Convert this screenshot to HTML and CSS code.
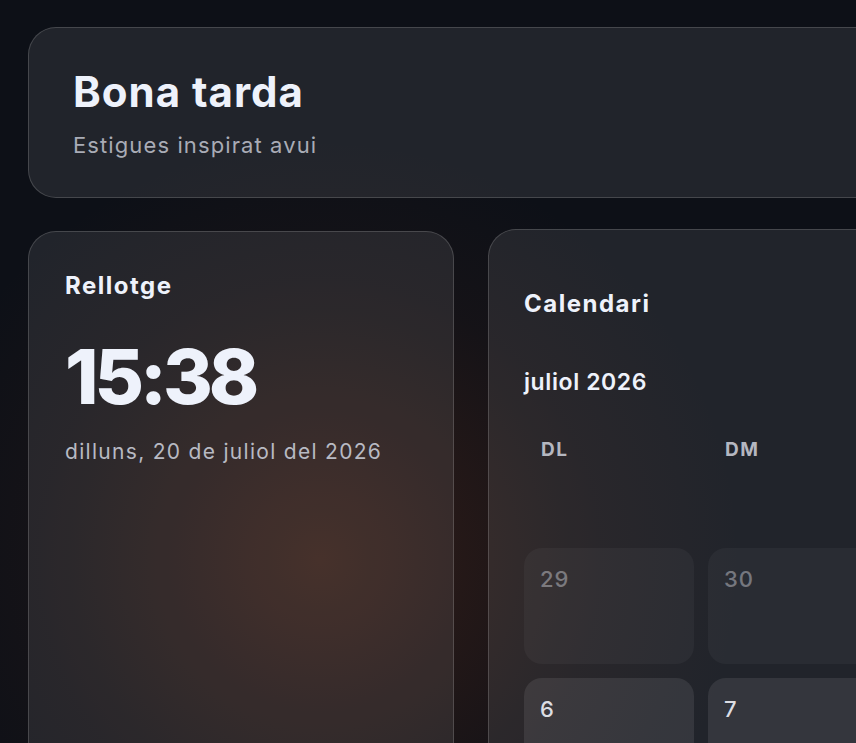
FILE: index.html
```html
<!DOCTYPE html>
<html lang="ca">
<head>
    <meta charset="UTF-8">
    <meta name="viewport" content="width=device-width, initial-scale=1.0">
    <title>Tauler</title>
    <link rel="stylesheet" href="styles.css">
</head>
<body>
    <main class="dashboard">
        <header class="card greeting">
            <h1>Bona tarda</h1>
            <p>Estigues inspirat avui</p>
        </header>

        <section class="card clock">
            <h2 class="card-title">Rellotge</h2>
            <div class="clock-time">15:38</div>
            <div class="clock-date">dilluns, 20 de juliol del 2026</div>
        </section>

        <section class="card calendar">
            <div class="calendar-head">
                <h2 class="card-title">Calendari</h2>
                <div class="calendar-nav">
                    <button class="nav-btn">&lsaquo;</button>
                    <button class="nav-btn">Avui</button>
                    <button class="nav-btn">&rsaquo;</button>
                </div>
            </div>
            <div class="calendar-month">juliol 2026</div>

            <div class="calendar-grid">
                <div class="weekday">DL</div>
                <div class="weekday">DM</div>
                <div class="weekday">DC</div>
                <div class="weekday">DJ</div>
                <div class="weekday">DV</div>
                <div class="weekday">DS</div>
                <div class="weekday">DG</div>

                <div class="day other">29</div>
                <div class="day other">30</div>
                <div class="day">1</div>
                <div class="day">2</div>
                <div class="day">3</div>
                <div class="day">4</div>
                <div class="day">5</div>

                <div class="day">6</div>
                <div class="day">7</div>
                <div class="day">8</div>
                <div class="day">9</div>
                <div class="day">10</div>
                <div class="day">11</div>
                <div class="day">12</div>

                <div class="day">13</div>
                <div class="day">14</div>
                <div class="day">15</div>
                <div class="day">16</div>
                <div class="day">17</div>
                <div class="day">18</div>
                <div class="day">19</div>

                <div class="day today">20</div>
                <div class="day">21</div>
                <div class="day">22</div>
                <div class="day">23</div>
                <div class="day">24</div>
                <div class="day">25</div>
                <div class="day">26</div>

                <div class="day">27</div>
                <div class="day">28</div>
                <div class="day">29</div>
                <div class="day">30</div>
                <div class="day">31</div>
                <div class="day other">1</div>
                <div class="day other">2</div>
            </div>
        </section>
    </main>
</body>
</html>
```

FILE: styles.css
```css
* {
    margin: 0;
    padding: 0;
    box-sizing: border-box;
}

html, body {
    height: 100%;
}

body {
    font-family: Inter, "Noto Sans", sans-serif;
    color: #eef2fb;
    background-color: #0d1017;
    background-image: radial-gradient(circle at 320px 560px,
        rgba(125, 55, 25, 0.36) 0,
        rgba(125, 55, 25, 0.2) 150px,
        rgba(125, 55, 25, 0.07) 280px,
        rgba(125, 55, 25, 0) 420px);
    background-repeat: no-repeat;
    padding: 27px 0 0 28px;
    overflow: hidden;
}

.dashboard {
    display: grid;
    grid-template-columns: 426px 1346px;
    column-gap: 34px;
    row-gap: 31px;
    width: max-content;
    align-items: start;
}

.card {
    background: rgba(255, 255, 255, 0.088);
    border: 1px solid rgba(255, 255, 255, 0.16);
    border-radius: 28px;
}

.card-title {
    font-size: 24px;
    line-height: 1.2;
    font-weight: 700;
    letter-spacing: 1.5px;
}

/* greeting */
.greeting {
    grid-column: 1 / -1;
    padding: 40px 44px 37px;
}

.greeting h1 {
    font-size: 42px;
    line-height: 48px;
    font-weight: 700;
    letter-spacing: 1px;
    margin-bottom: 14px;
}

.greeting p {
    font-size: 22px;
    line-height: 30px;
    color: #a9acb6;
    letter-spacing: 1.1px;
}

/* clock */
.clock {
    margin-top: 2px;
    min-height: 700px;
    padding: 40px 36px;
}

.clock-time {
    font-size: 76px;
    line-height: 76px;
    font-weight: 800;
    letter-spacing: -4px;
    margin-top: 37px;
}

.clock-date {
    font-size: 21px;
    line-height: 28px;
    color: #b8bac3;
    margin-top: 24px;
    letter-spacing: 1.3px;
}

/* calendar */
.calendar {
    padding: 38px 35px;
}

.calendar-head {
    display: flex;
    align-items: center;
    justify-content: space-between;
    min-height: 72px;
}

.calendar-nav {
    display: flex;
    gap: 10px;
}

.nav-btn {
    font-family: inherit;
    font-size: 16px;
    color: #eef2fb;
    background: rgba(255, 255, 255, 0.08);
    border: 1px solid rgba(255, 255, 255, 0.14);
    border-radius: 14px;
    padding: 10px 16px;
}

.calendar-month {
    font-size: 23px;
    line-height: 30px;
    font-weight: 600;
    letter-spacing: 0.6px;
    margin-top: 27px;
}

.calendar-grid {
    display: grid;
    grid-template-columns: repeat(7, 170px);
    grid-auto-rows: 116px;
    gap: 14px;
    margin-top: 21px;
}

.weekday {
    padding: 20px 17px;
    font-size: 19px;
    line-height: 23px;
    font-weight: 700;
    color: #b5b7c0;
    letter-spacing: 1.5px;
}

.day {
    padding: 17px 16px;
    font-size: 22px;
    line-height: 28px;
    font-weight: 500;
    color: #dcdde3;
    background: rgba(255, 255, 255, 0.085);
    border-radius: 18px;
    letter-spacing: 1px;
}

.day.other {
    opacity: 0.45;
}

.day.today {
    background: rgba(255, 140, 80, 0.25);
    color: #fff;
}
```
